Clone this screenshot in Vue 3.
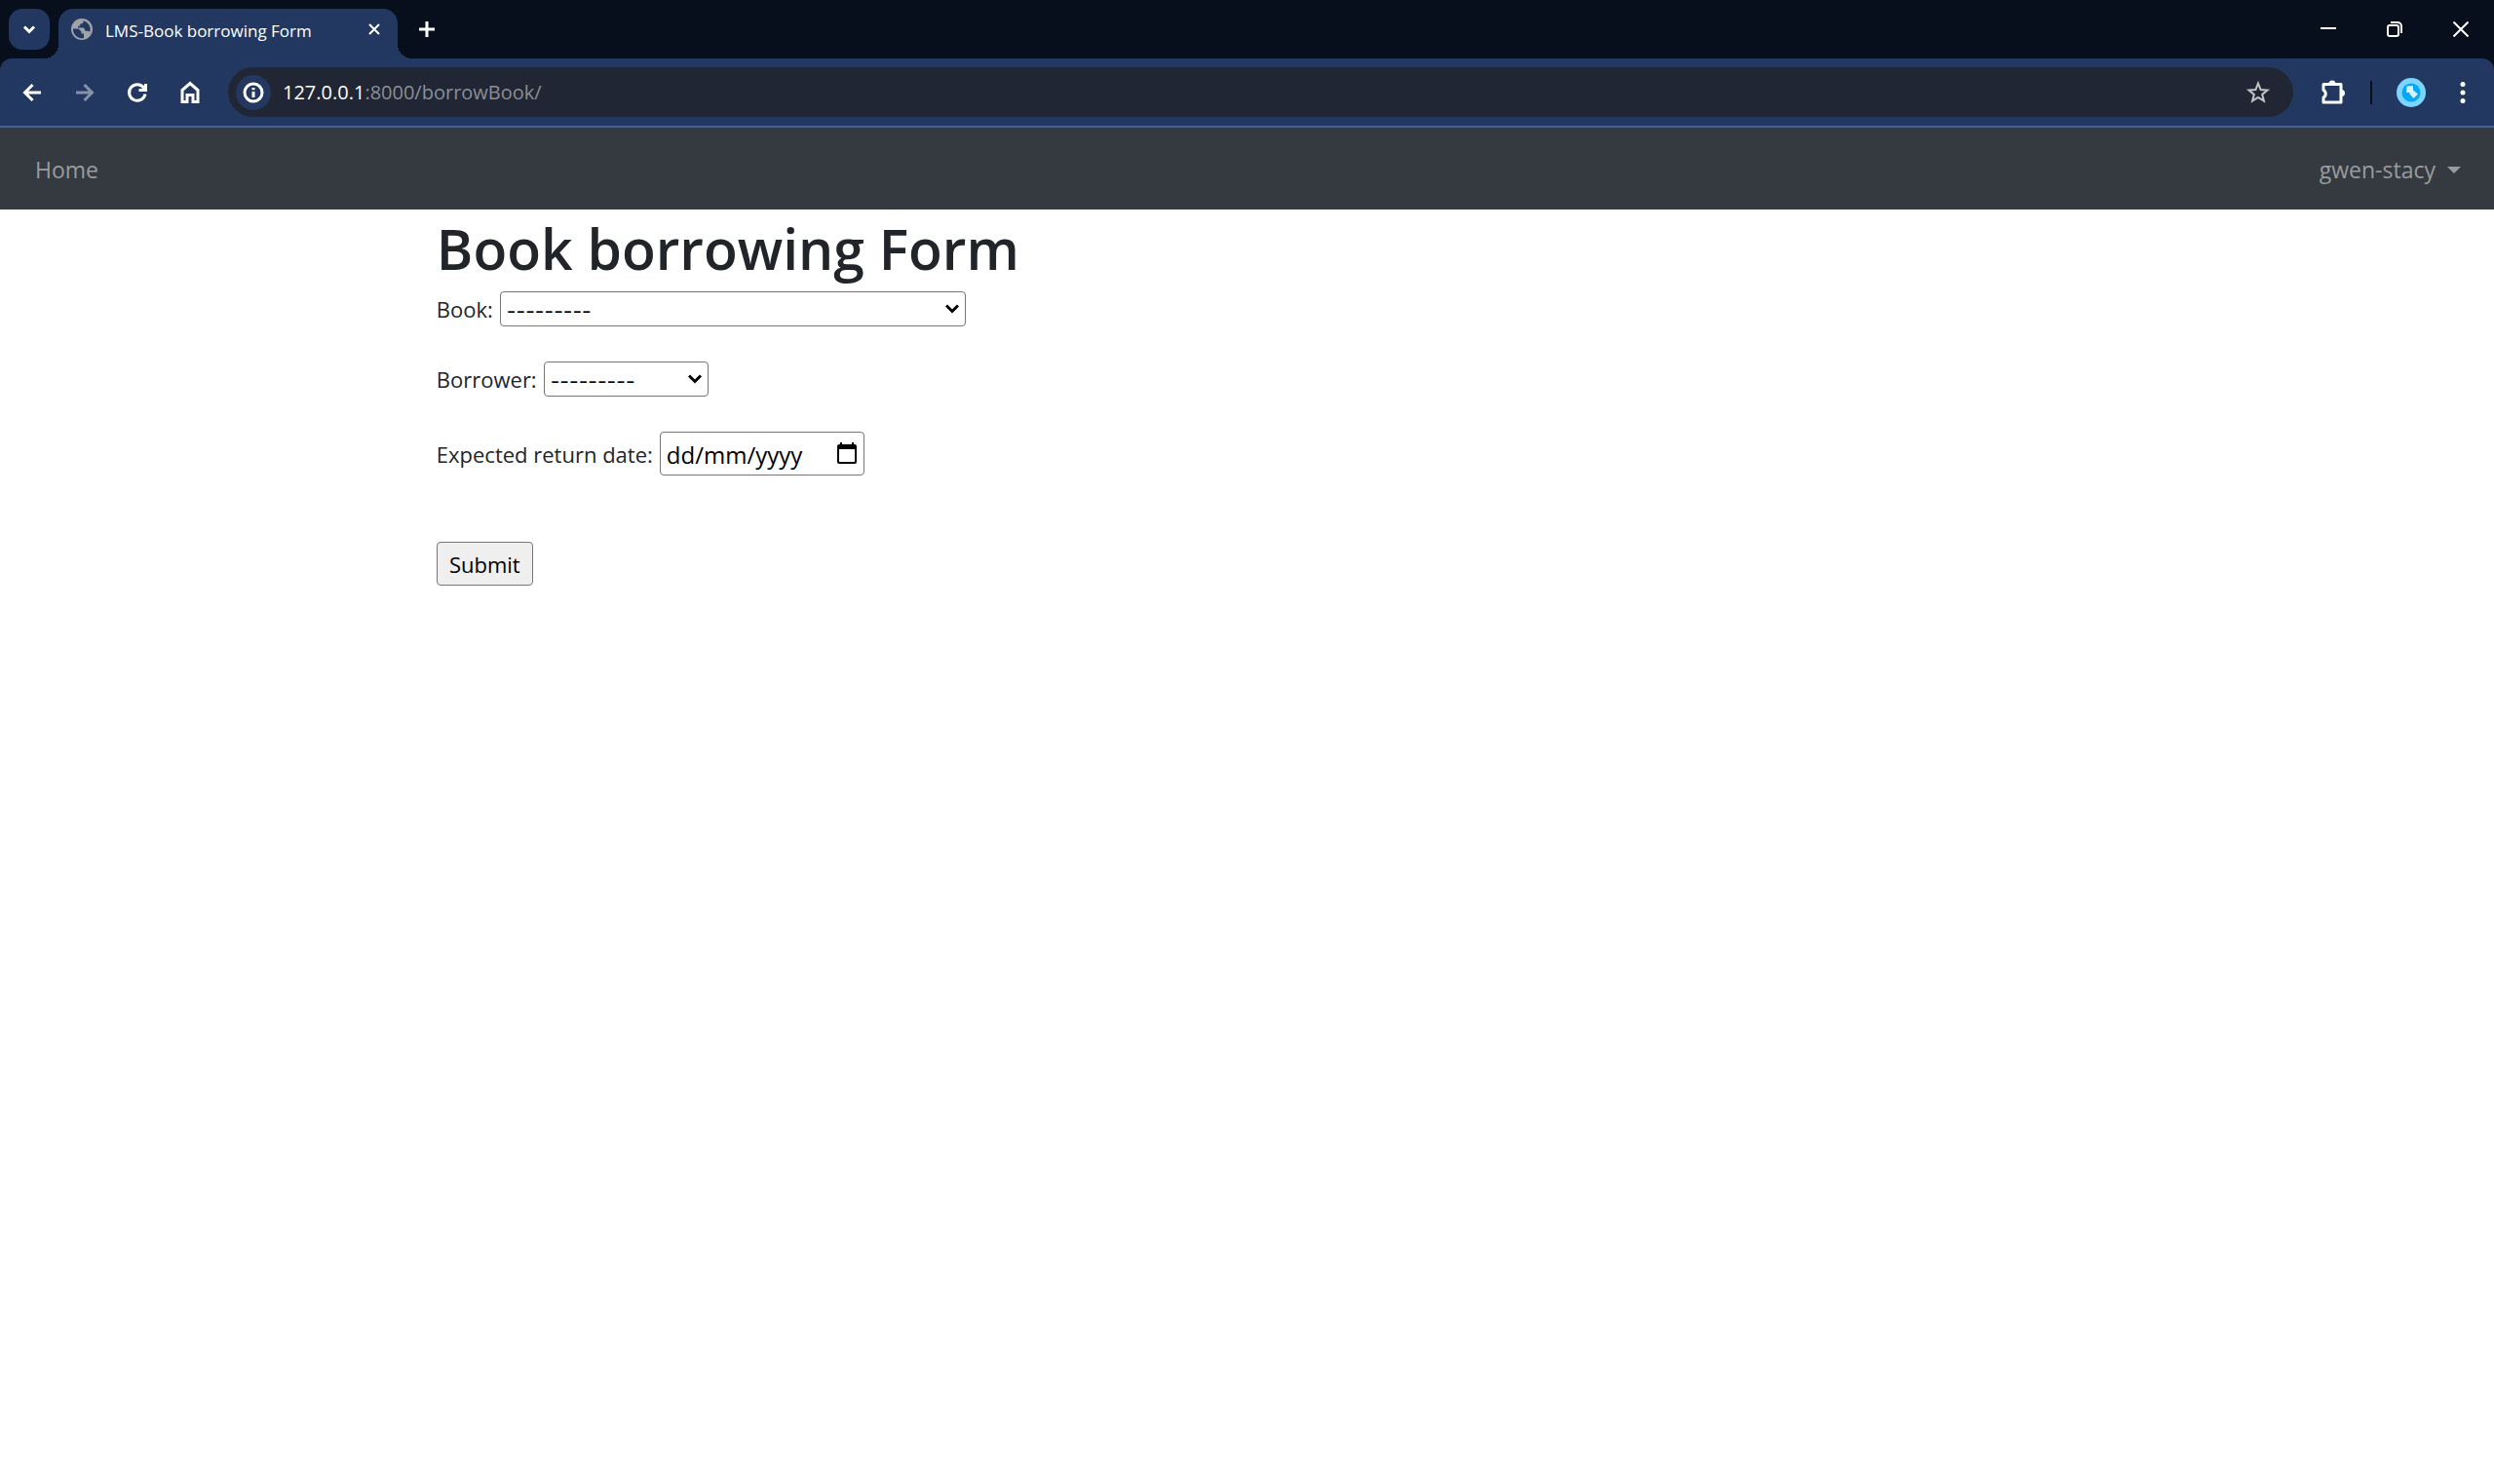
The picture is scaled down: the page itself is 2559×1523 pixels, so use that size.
<script setup>
import { ref } from 'vue'

const book = ref('')
const borrower = ref('')
const returnDate = ref('')
</script>

<template>
  <div class="browser">
    <header class="tab-strip">
      <button class="tab-search" type="button" aria-label="Search tabs">
        <svg width="14" height="14" viewBox="0 0 14 14"><path d="M2 4.5l5 5 5-5" /></svg>
      </button>
      <div class="tab">
        <svg class="globe" width="22" height="22" viewBox="0 0 22 22">
          <circle cx="11" cy="11" r="11" />
          <path d="M2 10.500h5.500l3 3v2h2.500v4.500A9 9 0 0 1 2 10.500zM12.500 2.200v1.800l-1.500 1.500H9.200v2.300H7v1.800h6l1.500 3.200h2l2.700.8A9 9 0 0 0 12.500 2.200z" />
        </svg>
        <span class="tab-title">LMS-Book borrowing Form</span>
        <button class="tab-close" type="button" aria-label="Close tab">
          <svg width="14" height="14" viewBox="0 0 14 14"><path d="M2 2l10 10M12 2L2 12" /></svg>
        </button>
      </div>
      <button class="new-tab" type="button" aria-label="New tab">
        <svg width="16" height="16" viewBox="0 0 16 16"><path d="M8 0v16M0 8h16" /></svg>
      </button>
      <div class="window-buttons">
        <button type="button" aria-label="Minimise">
          <svg width="16" height="16" viewBox="0 0 16 16"><path d="M0 7h16" /></svg>
        </button>
        <button type="button" aria-label="Restore">
          <svg width="16" height="16" viewBox="0 0 16 16"><rect x="1" y="4" width="11" height="11" rx="2" /><path d="M4 1h7a4 4 0 0 1 4 4v7" /></svg>
        </button>
        <button type="button" aria-label="Close window">
          <svg width="16" height="16" viewBox="0 0 16 16"><path d="M.5.5l15 15M15.500.5l-15 15" /></svg>
        </button>
      </div>
    </header>

    <div class="toolbar-back">
      <div class="toolbar">
        <button class="tool" type="button" aria-label="Back">
          <svg width="24" height="24" viewBox="0 0 24 24"><path d="M21 12H5M12.500 4L4.500 12l8 8" /></svg>
        </button>
        <button class="tool dim" type="button" aria-label="Forward">
          <svg width="24" height="24" viewBox="0 0 24 24"><path d="M3 12h16M11.500 4l8 8-8 8" /></svg>
        </button>
        <button class="tool" type="button" aria-label="Reload">
          <svg width="24" height="24" viewBox="0 0 24 24"><path d="M20 13.500A8.300 8.300 0 1 1 18.500 7l1.500 2M20.500 3v6.500H13.500" /></svg>
        </button>
        <button class="tool" type="button" aria-label="Home">
          <svg width="24" height="24" viewBox="0 0 24 24"><path d="M4 21.500V9.500l8-7 8 7v12h-5v-7H9v7z" /></svg>
        </button>
        <div class="omnibox">
          <button class="site-info" type="button" aria-label="Site information">
            <svg width="22" height="22" viewBox="0 0 22 22"><circle cx="11" cy="11" r="9" /><path d="M11 10v6M11 6v2.200" /></svg>
          </button>
          <a class="url" href="#"><span class="host">127.0.0.1</span>:8000/borrowBook/</a>
          <button class="star" type="button" aria-label="Bookmark">
            <svg width="26" height="26" viewBox="0 0 26 26"><path d="M13 3.500l2.600 6.500 6.900.5-5.300 4.400 1.700 6.800L13 18l-5.900 3.700 1.700-6.800-5.300-4.400 6.900-.5z" /></svg>
          </button>
        </div>
        <button class="puzzle" type="button" aria-label="Extensions">
          <svg width="28" height="28" viewBox="0 0 28 28"><path class="outline" d="M5 5.500h18v18.500h-18v-5c3-1.500 3-6 0-7.500z" /><path class="knob" d="M10.500 5a3.500 3.500 0 0 1 7 0zM23.500 11a3.500 3.500 0 0 1 0 7z" /></svg>
        </button>
        <span class="divider"></span>
        <button class="avatar" type="button" aria-label="Profile">
          <svg width="30" height="30" viewBox="0 0 30 30"><circle cx="15" cy="15" r="15" fill="#7bd5ff" /><circle cx="15" cy="15" r="9.500" fill="#00a8fa" /><path d="M10.500 8.500l6.500-.5v4.500l5 4-4.500 4.500-4-4.500v-1.500h-3.500z" fill="#d8f1ff" /></svg>
        </button>
        <button class="menu" type="button" aria-label="Menu">
          <svg width="6" height="24" viewBox="0 0 6 24"><circle cx="3" cy="3.500" r="2.500" /><circle cx="3" cy="12" r="2.500" /><circle cx="3" cy="20.500" r="2.500" /></svg>
        </button>
      </div>
    </div>

    <nav class="navbar">
      <a href="#">Home</a>
      <a href="#" class="user">gwen-stacy<span class="caret"></span></a>
    </nav>

    <main class="content">
      <h1>Book borrowing Form</h1>
      <form @submit.prevent>
        <div class="row">
          <label for="book">Book:</label>
          <span class="select book">
            <select id="book" v-model="book"><option value="">---------</option></select>
            <svg width="14" height="10" viewBox="0 0 14 10"><path d="M1 1.500l6 6 6-6" /></svg>
          </span>
        </div>
        <div class="row">
          <label for="borrower">Borrower:</label>
          <span class="select borrower">
            <select id="borrower" v-model="borrower"><option value="">---------</option></select>
            <svg width="14" height="10" viewBox="0 0 14 10"><path d="M1 1.500l6 6 6-6" /></svg>
          </span>
        </div>
        <div class="row">
          <label for="return-date">Expected return date:</label>
          <span class="date">
            <input id="return-date" v-model="returnDate" type="text" placeholder="dd/mm/yyyy" />
            <svg width="20" height="22" viewBox="0 0 20 22"><path d="M2 3h16a1 1 0 0 1 1 1v16a1 1 0 0 1-1 1H2a1 1 0 0 1-1-1V4a1 1 0 0 1 1-1z" fill="none" stroke="#000" stroke-width="2" /><path d="M1 3h18v4H1zM3 0h2v4H3zM15 0h2v4h-2z" /></svg>
          </span>
        </div>
        <button class="submit" type="submit">Submit</button>
      </form>
    </main>
  </div>
</template>

<style>
body {
  margin: 0;
  background: #fff;
}
</style>

<style scoped>
.browser {
  font-family: "Open Sans", "Noto Sans", sans-serif;
  font-size: 22px;
  color: #212529;
}
* {
  box-sizing: border-box;
}
button {
  display: flex;
  align-items: center;
  justify-content: center;
  padding: 0;
  border: 0;
  background: none;
  font: inherit;
}
svg {
  display: block;
  flex: none;
}
a {
  text-decoration: none;
}

.tab-strip {
  display: flex;
  height: 60px;
  padding: 9px 0 0 9px;
  background: #080f1c;
}
.tab-strip svg {
  fill: none;
  stroke: #fff;
  stroke-width: 2;
}
.tab-search {
  width: 42px;
  height: 42px;
  border-radius: 14px;
  background: #223860;
}
.tab-strip .tab-search svg,
.tab-strip .new-tab svg {
  stroke-width: 3;
}
.tab {
  position: relative;
  display: flex;
  align-items: center;
  width: 348px;
  margin-left: 9px;
  padding: 0 15px 9px 13px;
  border-radius: 15px 15px 0 0;
  background: #223860;
}
.tab::before,
.tab::after {
  content: "";
  position: absolute;
  bottom: 0;
  width: 15px;
  height: 15px;
}
.tab::before {
  right: 100%;
  background: radial-gradient(circle at 0 0, transparent 15px, #223860 15px);
}
.tab::after {
  left: 100%;
  background: radial-gradient(circle at 100% 0, transparent 15px, #223860 15px);
}
.tab-strip .globe {
  stroke: none;
}
.globe circle {
  fill: #9fa3a8;
}
.globe path {
  fill: #223860;
}
.tab-title {
  flex: 1;
  margin-left: 13px;
  padding-top: 3px;
  color: #fff;
  font-size: 17px;
  line-height: 24px;
  white-space: nowrap;
}
.tab-close {
  width: 18px;
  height: 24px;
}
.new-tab {
  width: 42px;
  height: 42px;
  margin-left: 9px;
}
.window-buttons {
  display: flex;
  margin-left: auto;
  height: 42px;
}
.window-buttons button {
  width: 68px;
}

.toolbar-back {
  background: #080f1c;
}
.toolbar {
  display: flex;
  align-items: center;
  height: 71px;
  padding: 0 20px 0 6px;
  border-bottom: 2px solid #4a6190;
  border-radius: 12px 12px 0 0;
  background: #223860;
}
.tool {
  width: 54px;
  height: 54px;
}
.tool svg {
  fill: none;
  stroke: #fff;
  stroke-width: 3;
}
.dim {
  opacity: 0.45;
}
.omnibox {
  display: flex;
  flex: 1;
  align-items: center;
  height: 51px;
  margin-left: 12px;
  padding: 0 23px 0 8px;
  border-radius: 26px;
  background: #202634;
}
.site-info {
  width: 36px;
  height: 36px;
  border-radius: 50%;
  background: #223860;
}
.site-info svg {
  fill: none;
  stroke: #fff;
  stroke-width: 3;
}
.url {
  flex: 1;
  margin-left: 12px;
  color: #8b8f96;
  font-size: 20px;
  line-height: 28px;
}
.host {
  color: #fff;
}
.star svg {
  fill: none;
  stroke: #c4c5c9;
  stroke-width: 2;
}
.puzzle {
  margin-left: 26px;
}
.puzzle .outline {
  fill: none;
  stroke: #fff;
  stroke-width: 3;
  stroke-linejoin: round;
}
.puzzle .knob,
.menu svg {
  fill: #fff;
}
.divider {
  width: 2px;
  height: 24px;
  margin: 0 25px;
  background: #080f1c;
}
.menu {
  width: 24px;
  height: 36px;
  margin-left: 26px;
}

.navbar {
  display: flex;
  align-items: center;
  justify-content: space-between;
  height: 84px;
  padding: 2px 34px 0 36px;
  background: #343a40;
}
.navbar a {
  color: #999c9f;
  font-size: 23px;
  line-height: 36px;
}
.user {
  display: flex;
  align-items: center;
}
.caret {
  margin-left: 12px;
  border: 7px solid transparent;
  border-top-color: currentColor;
  border-bottom: 0;
}

.content {
  padding: 4px 17.5%;
}
h1 {
  margin: 0 0 8px;
  font-size: 57px;
  font-weight: 600;
  line-height: 72px;
}
.row {
  display: flex;
  align-items: center;
  gap: 7px;
  margin-bottom: 36px;
}
.select,
.date {
  position: relative;
}
select,
input {
  display: block;
  width: 100%;
  margin: 0;
  border: 1px solid #767676;
  border-radius: 4px;
  background: #fff;
  color: #000;
  font: inherit;
  appearance: none;
}
select {
  height: 36px;
  padding: 4px 6px 0;
  font-family: Inter, "Open Sans", sans-serif;
  font-size: 21px;
}
.select svg {
  position: absolute;
  top: 13px;
  right: 7px;
  fill: none;
  stroke: #000;
  stroke-width: 3;
  pointer-events: none;
}
.book {
  width: 478px;
}
.borrower {
  width: 169px;
}
.date {
  width: 210px;
}
input {
  height: 45px;
  padding: 2px 6px 0;
  font-size: 24px;
}
input::placeholder {
  color: #000;
  opacity: 1;
}
.date svg {
  position: absolute;
  top: 11px;
  right: 8px;
}
.submit {
  width: 99px;
  height: 45px;
  margin-top: 68px;
  border: 1px solid #767676;
  border-radius: 4px;
  background: #efefef;
  color: #000;
}
</style>
